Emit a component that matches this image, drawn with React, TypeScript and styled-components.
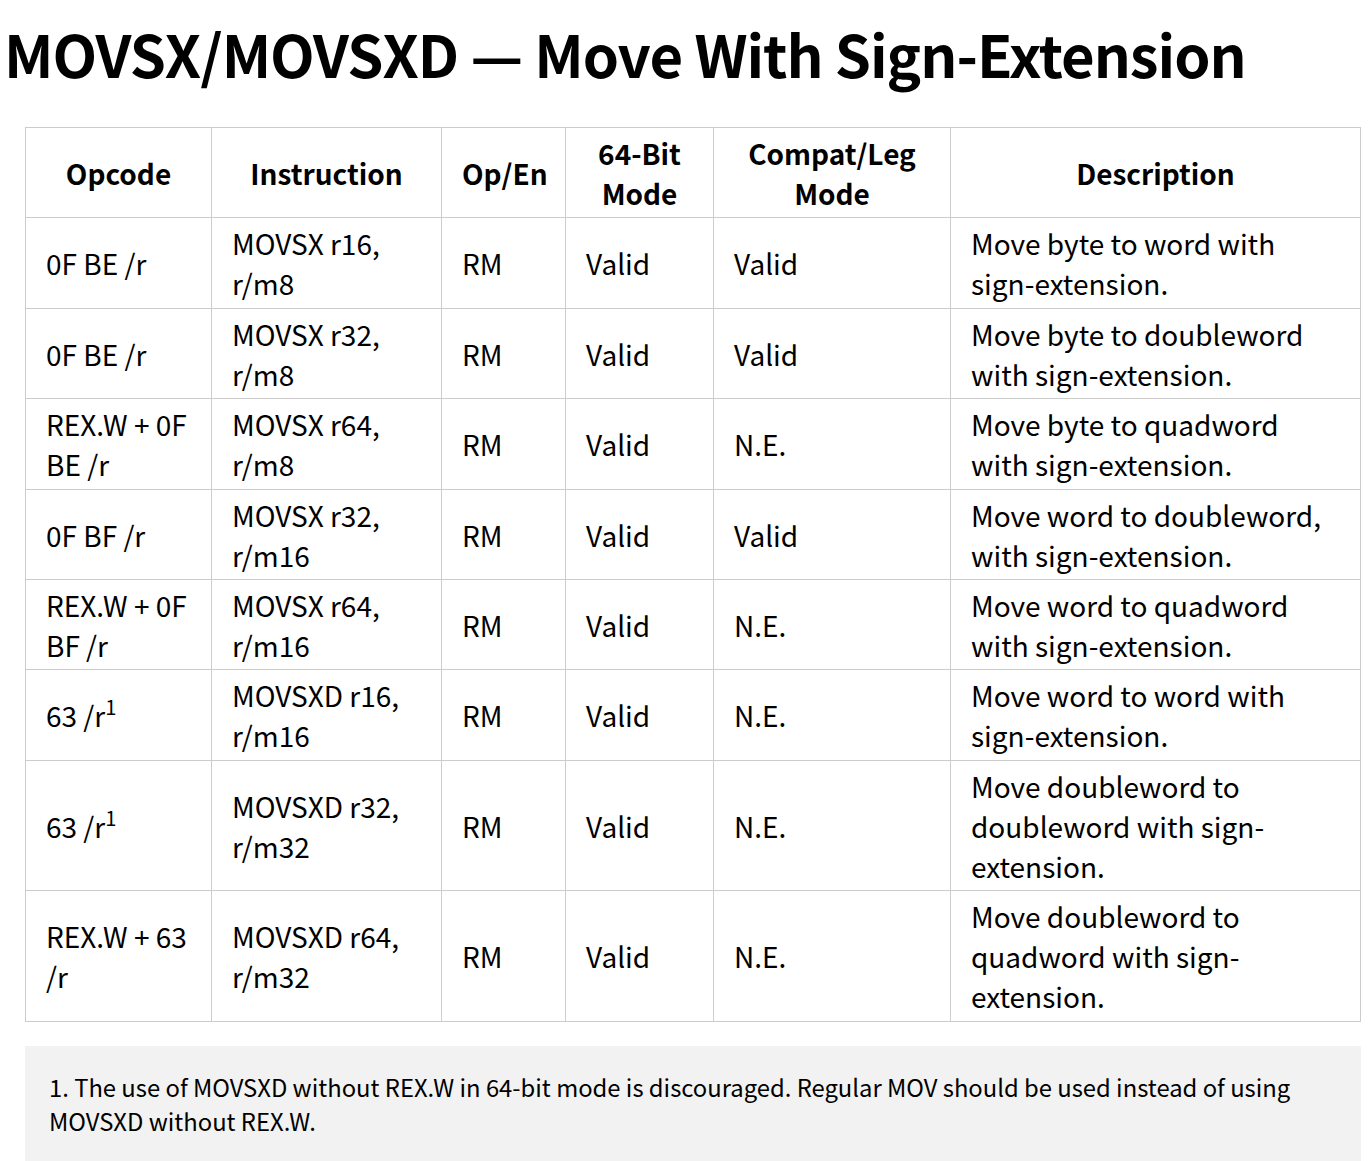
import React from "react"
import styled, { createGlobalStyle } from "styled-components"

const Global = createGlobalStyle`
  html, body {
    margin: 0;
    padding: 0;
    background: #fff;
  }
  body {
    font-family: "Noto Sans CJK SC", "Noto Sans", sans-serif;
    color: #000;
  }
`

const Page = styled.div`
  padding: 0 0 0 4px;
`

const Title = styled.h1`
  font-size: 58px;
  font-weight: 700;
  letter-spacing: -1px;
  line-height: 1;
  margin: 24px 0 0 0;
  white-space: nowrap;
`

const Body = styled.div`
  margin: 45px 11px 0 21px;
`

const Table = styled.table`
  width: 100%;
  border-collapse: collapse;
  table-layout: fixed;
  font-size: 28px;
`

const Th = styled.th`
  border: 1px solid #cccccc;
  font-weight: 700;
  text-align: center;
  line-height: 40px;
  padding: 5px 20px 4.4px;
  height: 80px;
`

const Td = styled.td`
  border: 1px solid #cccccc;
  line-height: 40px;
  padding: 5px 20px 4.4px;
  vertical-align: middle;
  text-align: left;
`

const Sup = styled.sup`
  font-size: 0.72em;
  line-height: 0;
  vertical-align: 0.6em;
`

const Note = styled.div`
  margin-top: 24px;
  background: #f2f2f2;
  padding: 24px 24px 28px 24px;
  font-size: 23.8px;
  line-height: 34px;
`

interface IRow {
  op: React.ReactNode
  ins: React.ReactNode
  b64: string
  compat: string
  desc: React.ReactNode
}

const rows: IRow[] = [
  { op: "0F BE /r", ins: "MOVSX r16, r/m8", b64: "Valid", compat: "Valid", desc: "Move byte to word with sign-extension." },
  { op: "0F BE /r", ins: "MOVSX r32, r/m8", b64: "Valid", compat: "Valid", desc: "Move byte to doubleword with sign-extension." },
  { op: "REX.W + 0F BE /r", ins: "MOVSX r64, r/m8", b64: "Valid", compat: "N.E.", desc: "Move byte to quadword with sign-extension." },
  { op: "0F BF /r", ins: "MOVSX r32, r/m16", b64: "Valid", compat: "Valid", desc: "Move word to doubleword, with sign-extension." },
  { op: "REX.W + 0F BF /r", ins: "MOVSX r64, r/m16", b64: "Valid", compat: "N.E.", desc: "Move word to quadword with sign-extension." },
  { op: <>63 /r<Sup>1</Sup></>, ins: "MOVSXD r16, r/m16", b64: "Valid", compat: "N.E.", desc: "Move word to word with sign-extension." },
  { op: <>63 /r<Sup>1</Sup></>, ins: "MOVSXD r32, r/m32", b64: "Valid", compat: "N.E.", desc: "Move doubleword to doubleword with sign-extension." },
  { op: "REX.W + 63 /r", ins: "MOVSXD r64, r/m32", b64: "Valid", compat: "N.E.", desc: "Move doubleword to quadword with sign-extension." },
]

export default function App() {
  return (
    <Page>
      <Global />
      <Title>MOVSX/MOVSXD — Move With Sign-Extension</Title>
      <Body>
        <Table>
          <colgroup>
            <col style={{ width: 186 }} />
            <col style={{ width: 230 }} />
            <col style={{ width: 124 }} />
            <col style={{ width: 148 }} />
            <col style={{ width: 237 }} />
            <col />
          </colgroup>
          <thead>
            <tr>
              <Th>Opcode</Th>
              <Th>Instruction</Th>
              <Th>Op/En</Th>
              <Th>64-Bit Mode</Th>
              <Th>Compat/Leg Mode</Th>
              <Th>Description</Th>
            </tr>
          </thead>
          <tbody>
            {rows.map((r, i) => (
              <tr key={i}>
                <Td>{r.op}</Td>
                <Td>{r.ins}</Td>
                <Td>RM</Td>
                <Td>{r.b64}</Td>
                <Td>{r.compat}</Td>
                <Td>{r.desc}</Td>
              </tr>
            ))}
          </tbody>
        </Table>
        <Note>
          1. The use of MOVSXD without REX.W in 64-bit mode is discouraged. Regular MOV should be used instead of using MOVSXD without REX.W.
        </Note>
      </Body>
    </Page>
  )
}
